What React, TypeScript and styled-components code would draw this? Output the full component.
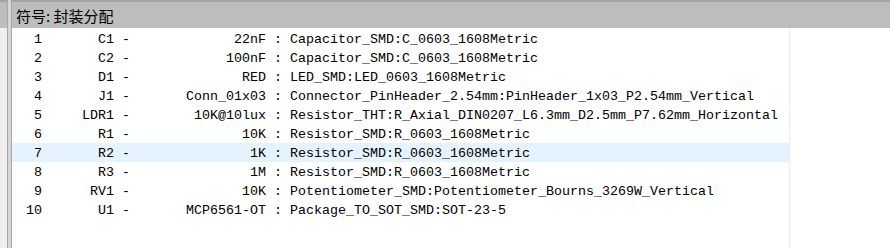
import React from 'react';
import styled, { createGlobalStyle } from 'styled-components';

const GlobalStyle = createGlobalStyle`
  html, body {
    margin: 0;
    padding: 0;
    background: #ffffff;
    overflow: hidden;
  }
`;

const Screen = styled.div`
  display: flex;
  width: 890px;
  height: 248px;
  background: #ffffff;
`;

const SidePane = styled.div`
  display: flex;
  flex-direction: column;
  width: 7px;
  background: #f0f0f0;
`;

const SideHeader = styled.div`
  height: 26px;
  border-top: 2px solid #a3a3a3;
  background: #bdbdbd;
`;

const Splitter = styled.div`
  width: 3px;
  background: #d6d6d6;
  border-left: 1px solid #a8a8a8;
  border-right: 1px solid #a8a8a8;
`;

const MainPane = styled.div`
  flex: 1;
  display: flex;
  flex-direction: column;
  min-width: 0;
`;

const PanelHeader = styled.div`
  display: flex;
  align-items: center;
  height: 26px;
  padding-left: 4px;
  border-top: 2px solid #a3a3a3;
  background: #bdbdbd;
  color: #000000;
  font-family: 'Noto Sans CJK SC', 'Noto Sans', sans-serif;
  font-size: 15px;
  line-height: 1;
  white-space: pre;
`;

const ListArea = styled.div`
  flex: 1;
  display: flex;
`;

const List = styled.div`
  width: 777px;
  padding-top: 1px;
  border-right: 1px solid #e6f0fb;
`;

const Row = styled.div<{ $selected?: boolean }>`
  display: grid;
  grid-template-columns: 30px 72px 24px 128px 24px auto;
  align-items: center;
  box-sizing: border-box;
  height: 19px;
  padding-top: 2px;
  background: ${(p) => (p.$selected ? '#e5f3ff' : 'transparent')};
  font-family: 'Liberation Mono', 'DejaVu Sans Mono', monospace;
  font-size: 13.333px;
  line-height: 17px;
  color: #000000;
  white-space: pre;
`;

const Cell = styled.span<{ $align?: 'left' | 'right' | 'center' }>`
  text-align: ${(p) => p.$align || 'left'};
`;

type Assignment = {
  ref: string;
  value: string;
  footprint: string;
};

const rows: Assignment[] = [
  { ref: 'C1', value: '22nF', footprint: 'Capacitor_SMD:C_0603_1608Metric' },
  { ref: 'C2', value: '100nF', footprint: 'Capacitor_SMD:C_0603_1608Metric' },
  { ref: 'D1', value: 'RED', footprint: 'LED_SMD:LED_0603_1608Metric' },
  { ref: 'J1', value: 'Conn_01x03', footprint: 'Connector_PinHeader_2.54mm:PinHeader_1x03_P2.54mm_Vertical' },
  { ref: 'LDR1', value: '10K@10lux', footprint: 'Resistor_THT:R_Axial_DIN0207_L6.3mm_D2.5mm_P7.62mm_Horizontal' },
  { ref: 'R1', value: '10K', footprint: 'Resistor_SMD:R_0603_1608Metric' },
  { ref: 'R2', value: '1K', footprint: 'Resistor_SMD:R_0603_1608Metric' },
  { ref: 'R3', value: '1M', footprint: 'Resistor_SMD:R_0603_1608Metric' },
  { ref: 'RV1', value: '10K', footprint: 'Potentiometer_SMD:Potentiometer_Bourns_3269W_Vertical' },
  { ref: 'U1', value: 'MCP6561-OT', footprint: 'Package_TO_SOT_SMD:SOT-23-5' },
];

const SELECTED = 6;

export default function App() {
  return (
    <>
      <GlobalStyle />
      <Screen>
        <SidePane>
          <SideHeader />
        </SidePane>
        <Splitter />
        <MainPane>
          <PanelHeader>符号: 封装分配</PanelHeader>
          <ListArea>
            <List>
              {rows.map((r, i) => (
                <Row key={r.ref} $selected={i === SELECTED}>
                  <Cell $align='right'>{i + 1}</Cell>
                  <Cell $align='right'>{r.ref}</Cell>
                  <Cell $align='center'> - </Cell>
                  <Cell $align='right'>{r.value}</Cell>
                  <Cell $align='center'> : </Cell>
                  <Cell>{r.footprint}</Cell>
                </Row>
              ))}
            </List>
          </ListArea>
        </MainPane>
      </Screen>
    </>
  );
}
